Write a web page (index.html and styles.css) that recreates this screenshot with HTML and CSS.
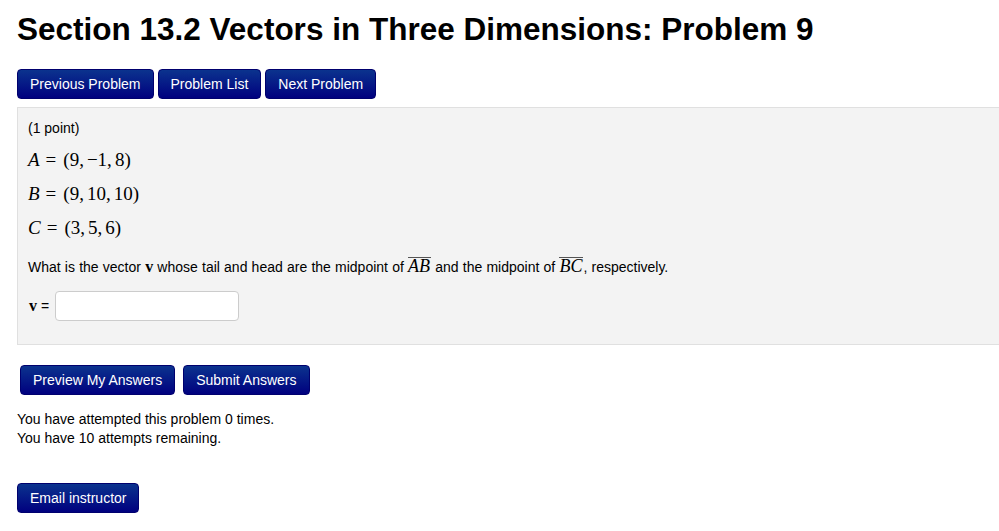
FILE: index.html
```html
<!DOCTYPE html>
<html>
<head>
<meta charset="utf-8">
<title>Problem 9</title>
<link rel="stylesheet" href="styles.css">
</head>
<body>
<h1 class="title">Section 13.2 Vectors in Three Dimensions: Problem 9</h1>
<div class="nav">
  <button class="btn">Previous Problem</button>
  <button class="btn">Problem List</button>
  <button class="btn">Next Problem</button>
</div>
<div class="problem">
  <p class="points">(1 point)</p>
  <p class="math"><i>A</i><span class="eq">=</span>(9,<span class="sp"></span>−1,<span class="sp"></span>8)</p>
  <p class="math"><i>B</i><span class="eq">=</span>(9,<span class="sp"></span>10,<span class="sp"></span>10)</p>
  <p class="math"><i>C</i><span class="eq">=</span>(3,<span class="sp"></span>5,<span class="sp"></span>6)</p>
  <p class="question">What is the vector <b class="vec">v</b> whose tail and head are the midpoint of <span class="ol"><i>AB</i></span> and the midpoint of <span class="ol"><i>BC</i></span>, respectively.</p>
  <div class="answer">
    <span class="lbl"><b class="vec">v</b> =</span>
    <input class="field" type="text">
  </div>
</div>
<div class="submit">
  <button class="btn">Preview My Answers</button>
  <button class="btn">Submit Answers</button>
</div>
<div class="attempts">
  <div>You have attempted this problem 0 times.</div>
  <div>You have 10 attempts remaining.</div>
</div>
<div class="email">
  <button class="btn">Email instructor</button>
</div>
</body>
</html>
```

FILE: styles.css
```css
html, body {
  margin: 0;
  padding: 0;
  background: #fff;
  overflow: hidden;
}
body {
  padding: 0 17px;
  font-family: "Liberation Sans", Arial, sans-serif;
  color: #000;
  font-size: 14px;
}
.title {
  font-size: 31.5px;
  line-height: 36px;
  font-weight: bold;
  margin: 11px 0 22px;
}
.nav {
  display: flex;
  gap: 4px;
  margin-bottom: 8px;
}
.btn {
  font-family: "Liberation Sans", Arial, sans-serif;
  font-size: 14px;
  color: #fff;
  height: 30px;
  padding: 0 12px;
  border: 1px solid #00006e;
  border-radius: 4px;
  background: linear-gradient(#0b338e, #00007f);
  cursor: pointer;
}
.problem {
  background: #f3f3f3;
  border: 1px solid #e0e0e0;
  margin-right: -30px;
  padding: 10px 10px 23px;
  height: 238px;
  box-sizing: border-box;
}
.problem p {
  margin: 0;
}
.points {
  line-height: 20px;
}
.math {
  font-family: "Liberation Serif", "Times New Roman", serif;
  font-size: 19px;
  line-height: 24px;
  margin-top: 10px !important;
}
.math i {
  font-style: italic;
}
.eq {
  margin: 0 7px 0 6px;
}
.sp {
  display: inline-block;
  width: 3px;
}
.question {
  line-height: 20px;
  margin-top: 17px !important;
  word-spacing: 0.3px;
}
.vec {
  font-family: "Liberation Serif", "Times New Roman", serif;
  font-size: 16px;
  font-weight: bold;
}
.ol {
  font-family: "Liberation Serif", "Times New Roman", serif;
  font-size: 18px;
  border-top: 1px solid #555;
  line-height: 16px;
  display: inline-block;
  padding-right: 1px;
}
.answer {
  display: flex;
  align-items: center;
  gap: 6px;
  margin-top: 14px;
}
.lbl {
  margin-left: 1px;
}
.field {
  width: 184px;
  height: 30px;
  box-sizing: border-box;
  border: 1px solid #ccc;
  border-radius: 4px;
  background: #fff;
}
.submit {
  display: flex;
  gap: 8px;
  margin: 20px 0 0 3px;
}
.attempts {
  margin-top: 15px;
  line-height: 19px;
}
.email {
  margin-top: 35px;
}
```
